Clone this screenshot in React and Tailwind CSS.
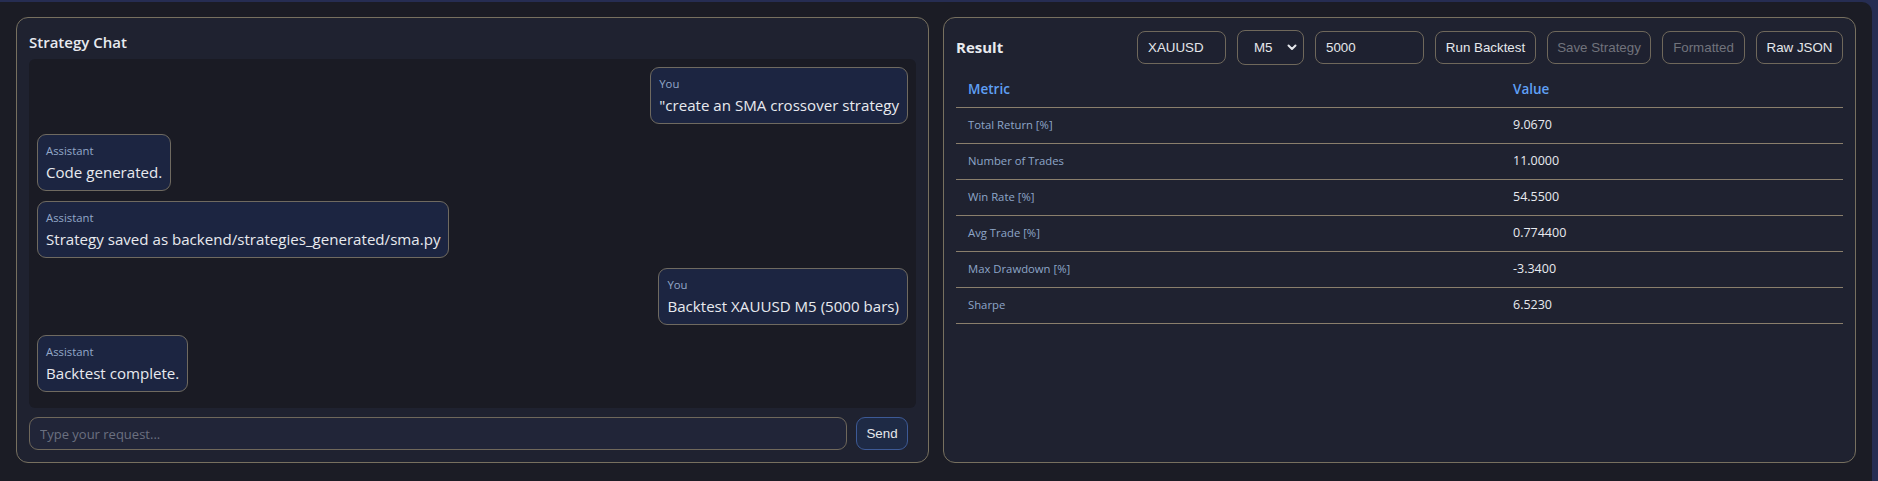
import React from "react";

const messages = [
  { role: "You", text: '"create an SMA crossover strategy' },
  { role: "Assistant", text: "Code generated." },
  { role: "Assistant", text: "Strategy saved as backend/strategies_generated/sma.py" },
  { role: "You", text: "Backtest XAUUSD M5 (5000 bars)" },
  { role: "Assistant", text: "Backtest complete." },
];

const rows = [
  ["Total Return [%]", "9.0670"],
  ["Number of Trades", "11.0000"],
  ["Win Rate [%]", "54.5500"],
  ["Avg Trade [%]", "0.774400"],
  ["Max Drawdown [%]", "-3.3400"],
  ["Sharpe", "6.5230"],
];

function Bubble({ role, text }) {
  const isUser = role === "You";
  return (
    <div
      className={
        "rounded-[9px] border border-[#6f6a60] bg-[#1c2541] px-2 pt-2 pb-[7px] " +
        (isUser ? "self-end" : "self-start")
      }
    >
      <div className="text-[11.3px] leading-4 text-[#93a8c9]">{role}</div>
      <div className="mt-[2px] text-[15.1px] leading-[22px] text-[#e8eaef] whitespace-nowrap">{text}</div>
    </div>
  );
}

const ctl =
  "h-[33px] rounded-[8px] border border-[#6f685b] bg-[#1e2130] font-['Liberation_Sans',Arial,sans-serif] text-[13.33px] flex items-center";

export default function App() {
  return (
    <div className="min-h-[481px] bg-[#262d52] pt-[2px] pr-[6px] font-['Open_Sans',sans-serif]">
      <div className="h-[479px] rounded-tr-[10px] bg-[#1b1c25] px-4 pt-[15px] grid grid-cols-2 gap-[14px] items-start">
        {/* Left panel */}
        <div className="h-[446px] rounded-[12px] border border-[#77705f] bg-[#1f2230] p-3 flex flex-col">
          <h2 className="text-[15px] font-semibold leading-6 text-[#e8eaef]">Strategy Chat</h2>
          <div className="mt-[5px] flex-1 rounded-md bg-[#1a1b24] p-2 flex flex-col gap-[10px]">
            {messages.map((m, i) => (
              <Bubble key={i} role={m.role} text={m.text} />
            ))}
          </div>
          <div className="mt-[9px] flex gap-[9px] pr-2">
            <input
              className="flex-1 h-[33px] rounded-[9px] border border-[#6f685b] bg-[#212538] px-[10px] text-[13px] text-[#e5e7eb] placeholder:text-[#6b7080] outline-none"
              placeholder="Type your request..."
            />
            <button className="h-[33px] w-[52px] rounded-[9px] border border-[#3d5a96] bg-[#1e2a45] font-['Liberation_Sans',Arial,sans-serif] text-[13.33px] text-[#e5e7eb]">
              Send
            </button>
          </div>
        </div>

        {/* Right panel */}
        <div className="h-[446px] rounded-[12px] border border-[#77705f] bg-[#1f2230] p-3 flex flex-col">
          <div className="h-[35px] flex items-center justify-between">
            <h2 className="text-[15px] font-bold text-[#e8eaef]">Result</h2>
            <div className="flex items-center gap-[11px]">
              <div className={ctl + " w-[89px] px-[10px] text-[#e5e7eb]"}>XAUUSD</div>
              <div className={ctl + " h-[35px] w-[67px] pl-[16px] pr-[5px] justify-between text-[#e5e7eb]"}>
                <span>M5</span>
                <svg width="10" height="7" viewBox="0 0 10 7" className="mr-[1px]">
                  <path d="M1.5 1.5 L5 5 L8.5 1.5" fill="none" stroke="#e5e7eb" strokeWidth="2" strokeLinecap="round" strokeLinejoin="round" />
                </svg>
              </div>
              <div className={ctl + " w-[109px] px-[10px] text-[#e5e7eb]"}>5000</div>
              <button className={ctl + " w-[101px] justify-center text-[#e5e7eb]"}>Run Backtest</button>
              <button className={ctl + " w-[104px] justify-center border-[#4a4a4f] text-[#71737c]"}>Save Strategy</button>
              <button className={ctl + " w-[83px] justify-center border-[#4a4a4f] text-[#71737c]"}>Formatted</button>
              <button className={ctl + " w-[87px] justify-center text-[#e5e7eb]"}>Raw JSON</button>
            </div>
          </div>
          <table className="mt-[6px] w-full border-collapse">
            <thead>
              <tr className="border-b border-[#8a7f6c]">
                <th className="w-[545px] h-[36px] px-3 text-left text-[13.5px] font-semibold text-[#5fa0f5]">Metric</th>
                <th className="h-[36px] px-3 text-left text-[13.5px] font-semibold text-[#5fa0f5]">Value</th>
              </tr>
            </thead>
            <tbody>
              {rows.map(([k, v]) => (
                <tr key={k} className="border-b border-[#8a7f6c]">
                  <td className="h-[36px] px-3 text-[11.3px] text-[#8ea6c8]">{k}</td>
                  <td className="h-[36px] px-3 text-[12.5px] text-[#e8eaef]">{v}</td>
                </tr>
              ))}
            </tbody>
          </table>
        </div>
      </div>
    </div>
  );
}
